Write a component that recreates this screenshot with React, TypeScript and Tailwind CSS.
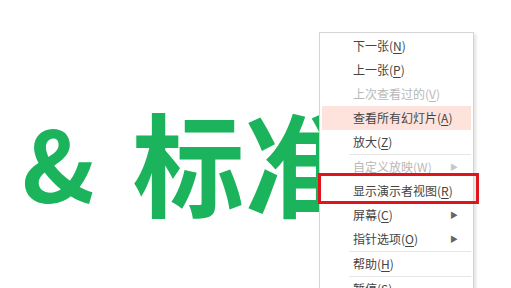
import React from 'react';

type Item =
  | { kind: 'sep' }
  | { kind: 'item'; label: string; key: string; disabled?: boolean; active?: boolean; sub?: boolean };

const items: Item[] = [
  { kind: 'item', label: '下一张', key: 'N' },
  { kind: 'item', label: '上一张', key: 'P' },
  { kind: 'item', label: '上次查看过的', key: 'V', disabled: true },
  { kind: 'item', label: '查看所有幻灯片', key: 'A', active: true },
  { kind: 'item', label: '放大', key: 'Z' },
  { kind: 'sep' },
  { kind: 'item', label: '自定义放映', key: 'W', disabled: true, sub: true },
  { kind: 'item', label: '显示演示者视图', key: 'R' },
  { kind: 'item', label: '屏幕', key: 'C', sub: true },
  { kind: 'item', label: '指针选项', key: 'O', sub: true },
  { kind: 'sep' },
  { kind: 'item', label: '帮助', key: 'H' },
  { kind: 'sep' },
  { kind: 'item', label: '暂停', key: 'S' },
];

function MenuRow({ item }: { item: Extract<Item, { kind: 'item' }> }) {
  return (
    <div
      className={`relative flex items-center h-[24px] mx-[2px] pl-[31px] pr-3 ${
        item.active ? 'bg-[#fde3dc]' : ''
      } ${item.disabled ? 'text-[#b8b8b8]' : 'text-[#444444]'}`}
    >
      <span>
        {item.label}(<span className="underline underline-offset-2">{item.key}</span>)
      </span>
      {item.sub && (
        <span
          className={`ml-auto mr-[1px] text-[8px] ${item.disabled ? 'text-[#c8c8c8]' : 'text-[#666666]'}`}
        >
          ▶
        </span>
      )}
    </div>
  );
}

export default function App() {
  return (
    <div className="relative w-[511px] h-[288px] overflow-hidden bg-white">
      {/* slide text */}
      <div
        className="pt-[104px] pl-[22px] flex items-center gap-[40px] text-[#1bb35b] font-bold leading-none whitespace-nowrap"
        style={{ fontFamily: '"Noto Sans CJK SC", "Noto Sans", sans-serif' }}
      >
        <span className="text-[98px] tracking-[-2px]">&amp;</span>
        <span className="text-[112px]">标准</span>
      </div>

      {/* context menu */}
      <div
        className="absolute left-[319px] top-[32px] w-[155px] pt-[1px] pb-2 bg-white border border-[#d4d4d4] shadow-[2px_2px_3px_rgba(0,0,0,0.12)] text-[12px]"
        style={{ fontFamily: '"Noto Sans CJK SC", "Microsoft YaHei", sans-serif' }}
      >
        {items.map((item, i) =>
          item.kind === 'sep' ? (
            <div key={i} className="ml-[29px] mr-[2px] h-[1px] bg-[#e6e6e6]" />
          ) : (
            <MenuRow key={i} item={item} />
          )
        )}
      </div>

      {/* red highlight annotation */}
      <div className="absolute left-[318px] top-[173px] w-[161px] h-[31px] border-[3px] border-[#e0141c]" />
    </div>
  );
}
